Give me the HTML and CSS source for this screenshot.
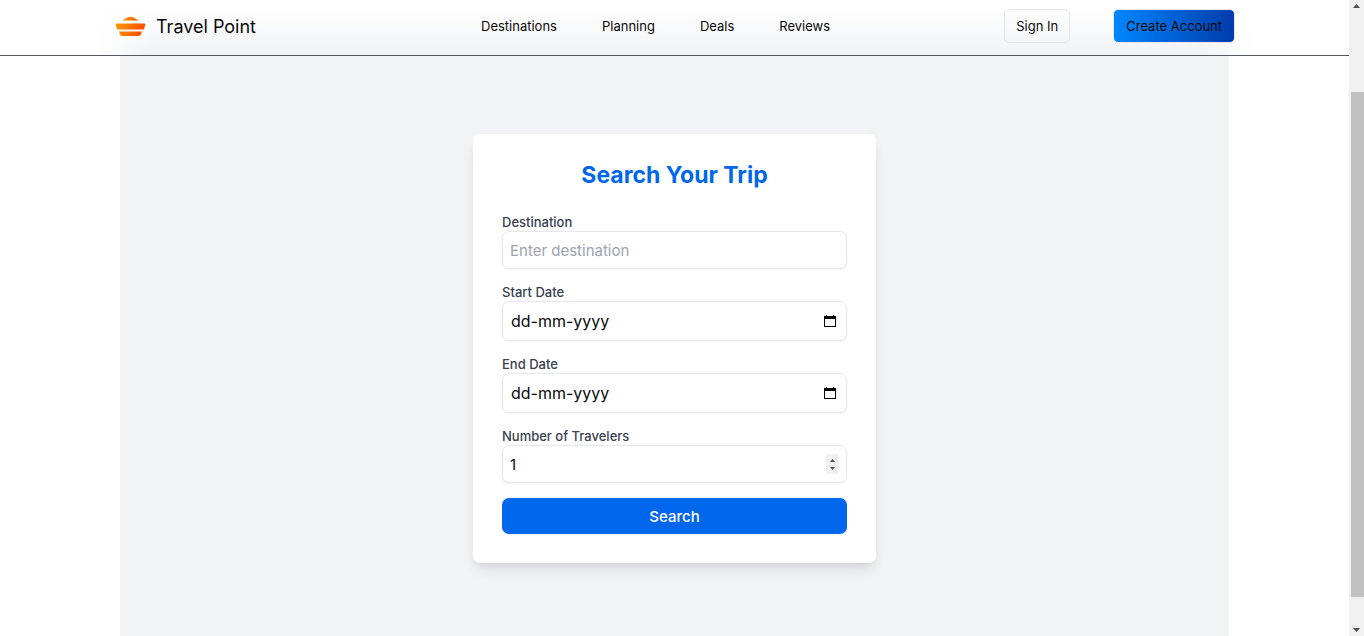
FILE: index.html
```html
<!DOCTYPE html>
<html lang="en">
<head>
<meta charset="utf-8">
<meta name="viewport" content="width=device-width, initial-scale=1">
<title>Travel Point</title>
<link rel="stylesheet" href="styles.css">
</head>
<body>
<div class="page">
  <header class="header">
    <a class="brand" href="#">
      <svg class="brand-logo" viewBox="0 0 32 20" aria-hidden="true">
        <defs>
          <linearGradient id="sun" gradientUnits="userSpaceOnUse" x1="2" y1="4" x2="29" y2="16">
            <stop offset="0" stop-color="#ff9a00"/>
            <stop offset="1" stop-color="#ff4a00"/>
          </linearGradient>
        </defs>
        <path fill="url(#sun)" d="M7 4.500Q10 3.200 12.500 1.600Q15.500 0 18.500 1.600Q21 3.200 24 4.500Z"/>
        <path fill="url(#sun)" d="M2 7.400H29Q30.700 7.400 30.300 9L28.800 13.500H2.200L.7 9Q.3 7.400 2 7.400Z"/>
        <path fill="url(#sun)" d="M4 15.600H27L25.800 18.600Q25.300 20 23.700 20H7.300Q5.700 20 5.200 18.600Z"/>
      </svg>
      <span>Travel Point</span>
    </a>
    <nav class="nav">
      <a href="#">Destinations</a>
      <a href="#">Planning</a>
      <a href="#">Deals</a>
      <a href="#">Reviews</a>
    </nav>
    <div class="actions">
      <button class="btn btn-outline" type="button">Sign In</button>
      <button class="btn btn-gradient" type="button">Create Account</button>
    </div>
  </header>
  <main class="main">
    <form class="card">
      <h2 class="title">Search Your Trip</h2>
      <div class="field">
        <label for="destination">Destination</label>
        <input class="control" id="destination" type="text" placeholder="Enter destination">
      </div>
      <div class="field">
        <label for="start">Start Date</label>
        <div class="control control-group control-date">
          <input id="start" type="text" placeholder="dd-mm-yyyy">
          <button type="button" aria-label="Choose start date">
            <svg viewBox="0 0 12 14" aria-hidden="true"><path d="M2 1H3V2H9V1H10V2H12V13H0V2H2ZM1 5V12H11V5Z" fill-rule="evenodd"/></svg>
          </button>
        </div>
      </div>
      <div class="field">
        <label for="end">End Date</label>
        <div class="control control-group control-date">
          <input id="end" type="text" placeholder="dd-mm-yyyy">
          <button type="button" aria-label="Choose end date">
            <svg viewBox="0 0 12 14" aria-hidden="true"><path d="M2 1H3V2H9V1H10V2H12V13H0V2H2ZM1 5V12H11V5Z" fill-rule="evenodd"/></svg>
          </button>
        </div>
      </div>
      <div class="field">
        <label for="travelers">Number of Travelers</label>
        <div class="control control-group">
          <input id="travelers" type="number" min="1" value="1">
          <svg class="spinner" viewBox="0 0 13 20" aria-hidden="true"><path d="M4 8H9L6.500 5ZM4 13H9L6.500 16Z"/></svg>
        </div>
      </div>
      <button class="submit" type="submit">Search</button>
    </form>
  </main>
</div>
<div class="scrollbar" aria-hidden="true">
  <svg viewBox="0 0 7 4"><path d="M0 4H7L3.500 0Z"/></svg>
  <div class="track"><div class="thumb"></div></div>
  <svg viewBox="0 0 7 4"><path d="M0 0H7L3.500 4Z"/></svg>
</div>
</body>
</html>
```
FILE: styles.css
```css
* { box-sizing: border-box; }

body {
  margin: 0;
  min-height: 100vh;
  display: grid;
  grid-template-columns: 1fr 15px;
  font-family: Inter, "Noto Sans", sans-serif;
  font-size: 13px;
  color: #0a0a0a;
  background: #fff;
}

a { color: inherit; text-decoration: none; }
button, input { font: inherit; color: inherit; }

.page { display: flex; flex-direction: column; }

.header {
  display: grid;
  grid-template-columns: 366px 1fr auto;
  align-items: center;
  padding: 9px 114px 12px 115px;
  border-bottom: 1px solid #58595c;
  background:
    linear-gradient(#fff 10%, rgba(255, 255, 255, 0)),
    linear-gradient(90deg, #fff 95px, #f2f3f5 150px, #f2f3f5 calc(100% - 150px), #fff calc(100% - 95px));
}

.brand {
  display: flex;
  align-items: center;
  gap: 9px;
  font-size: 18px;
}
.brand-logo { width: 32px; height: 20px; }

.nav { display: flex; gap: 45px; }

.actions { display: flex; gap: 43px; }
.btn {
  height: 34px;
  padding: 0 11px;
  border: 1px solid #e5e7eb;
  border-radius: 5px;
  background: transparent;
}
.btn-gradient {
  padding: 0 12px;
  background: linear-gradient(90deg, #0086ff, #003cac);
}

.main {
  flex: 1;
  margin: 0 120px;
  padding: 78px 16px 73px;
  background: #f2f3f5;
}

.card {
  display: flex;
  flex-direction: column;
  gap: 14px;
  max-width: 403px;
  margin: 0 auto;
  padding: 29px;
  border-radius: 7px;
  background: #fff;
  box-shadow: 0 9px 14px -3px rgba(0, 0, 0, .1), 0 4px 6px -4px rgba(0, 0, 0, .1);
}

.title {
  margin: 0 0 12px;
  font-size: 23px;
  line-height: 24px;
  font-weight: 700;
  text-align: center;
  color: #0066eb;
}

.field { display: flex; flex-direction: column; }
.field label {
  line-height: 18px;
  font-weight: 500;
  color: #374151;
}

.control {
  width: 100%;
  height: 38px;
  padding: 0 7px;
  border: 1px solid #e5e7eb;
  border-radius: 7px;
  background: #fff;
  box-shadow: 0 1px 2px rgba(0, 0, 0, .05);
  font-size: 15px;
}
.control::placeholder { color: #9ca3af; opacity: 1; }

.control-group {
  display: flex;
  align-items: center;
}
.control-group input {
  flex: 1;
  min-width: 0;
  padding: 0;
  border: 0;
  background: none;
  appearance: textfield;
}
.control-group input::placeholder { color: #0a0a0a; opacity: 1; }
.control-group input::-webkit-inner-spin-button { appearance: none; margin: 0; }
.control-group button {
  display: flex;
  padding: 0;
  border: 0;
  background: none;
}

.control-date {
  height: 40px;
  padding: 0 10px 0 8px;
  font-size: 16px;
}
.control-date svg { width: 12px; height: 14px; }

.spinner {
  width: 13px;
  height: 20px;
  background: #f0f0f0;
  fill: #505050;
}

.submit {
  height: 36px;
  margin-top: 1px;
  border: 0;
  border-radius: 7px;
  background: #0066eb;
  color: #fff;
  font-size: 15px;
  font-weight: 500;
}

.scrollbar {
  display: flex;
  flex-direction: column;
  align-items: center;
  gap: 4px;
  padding: 4px 0;
  background: #f0f0f0;
}
.scrollbar svg { width: 7px; height: 4px; fill: #505050; }
.track {
  flex: 1;
  align-self: stretch;
  display: flex;
  flex-direction: column;
  padding: 80px 0 27px 2px;
}
.thumb { flex: 1; background: #c1c1c1; }
```
